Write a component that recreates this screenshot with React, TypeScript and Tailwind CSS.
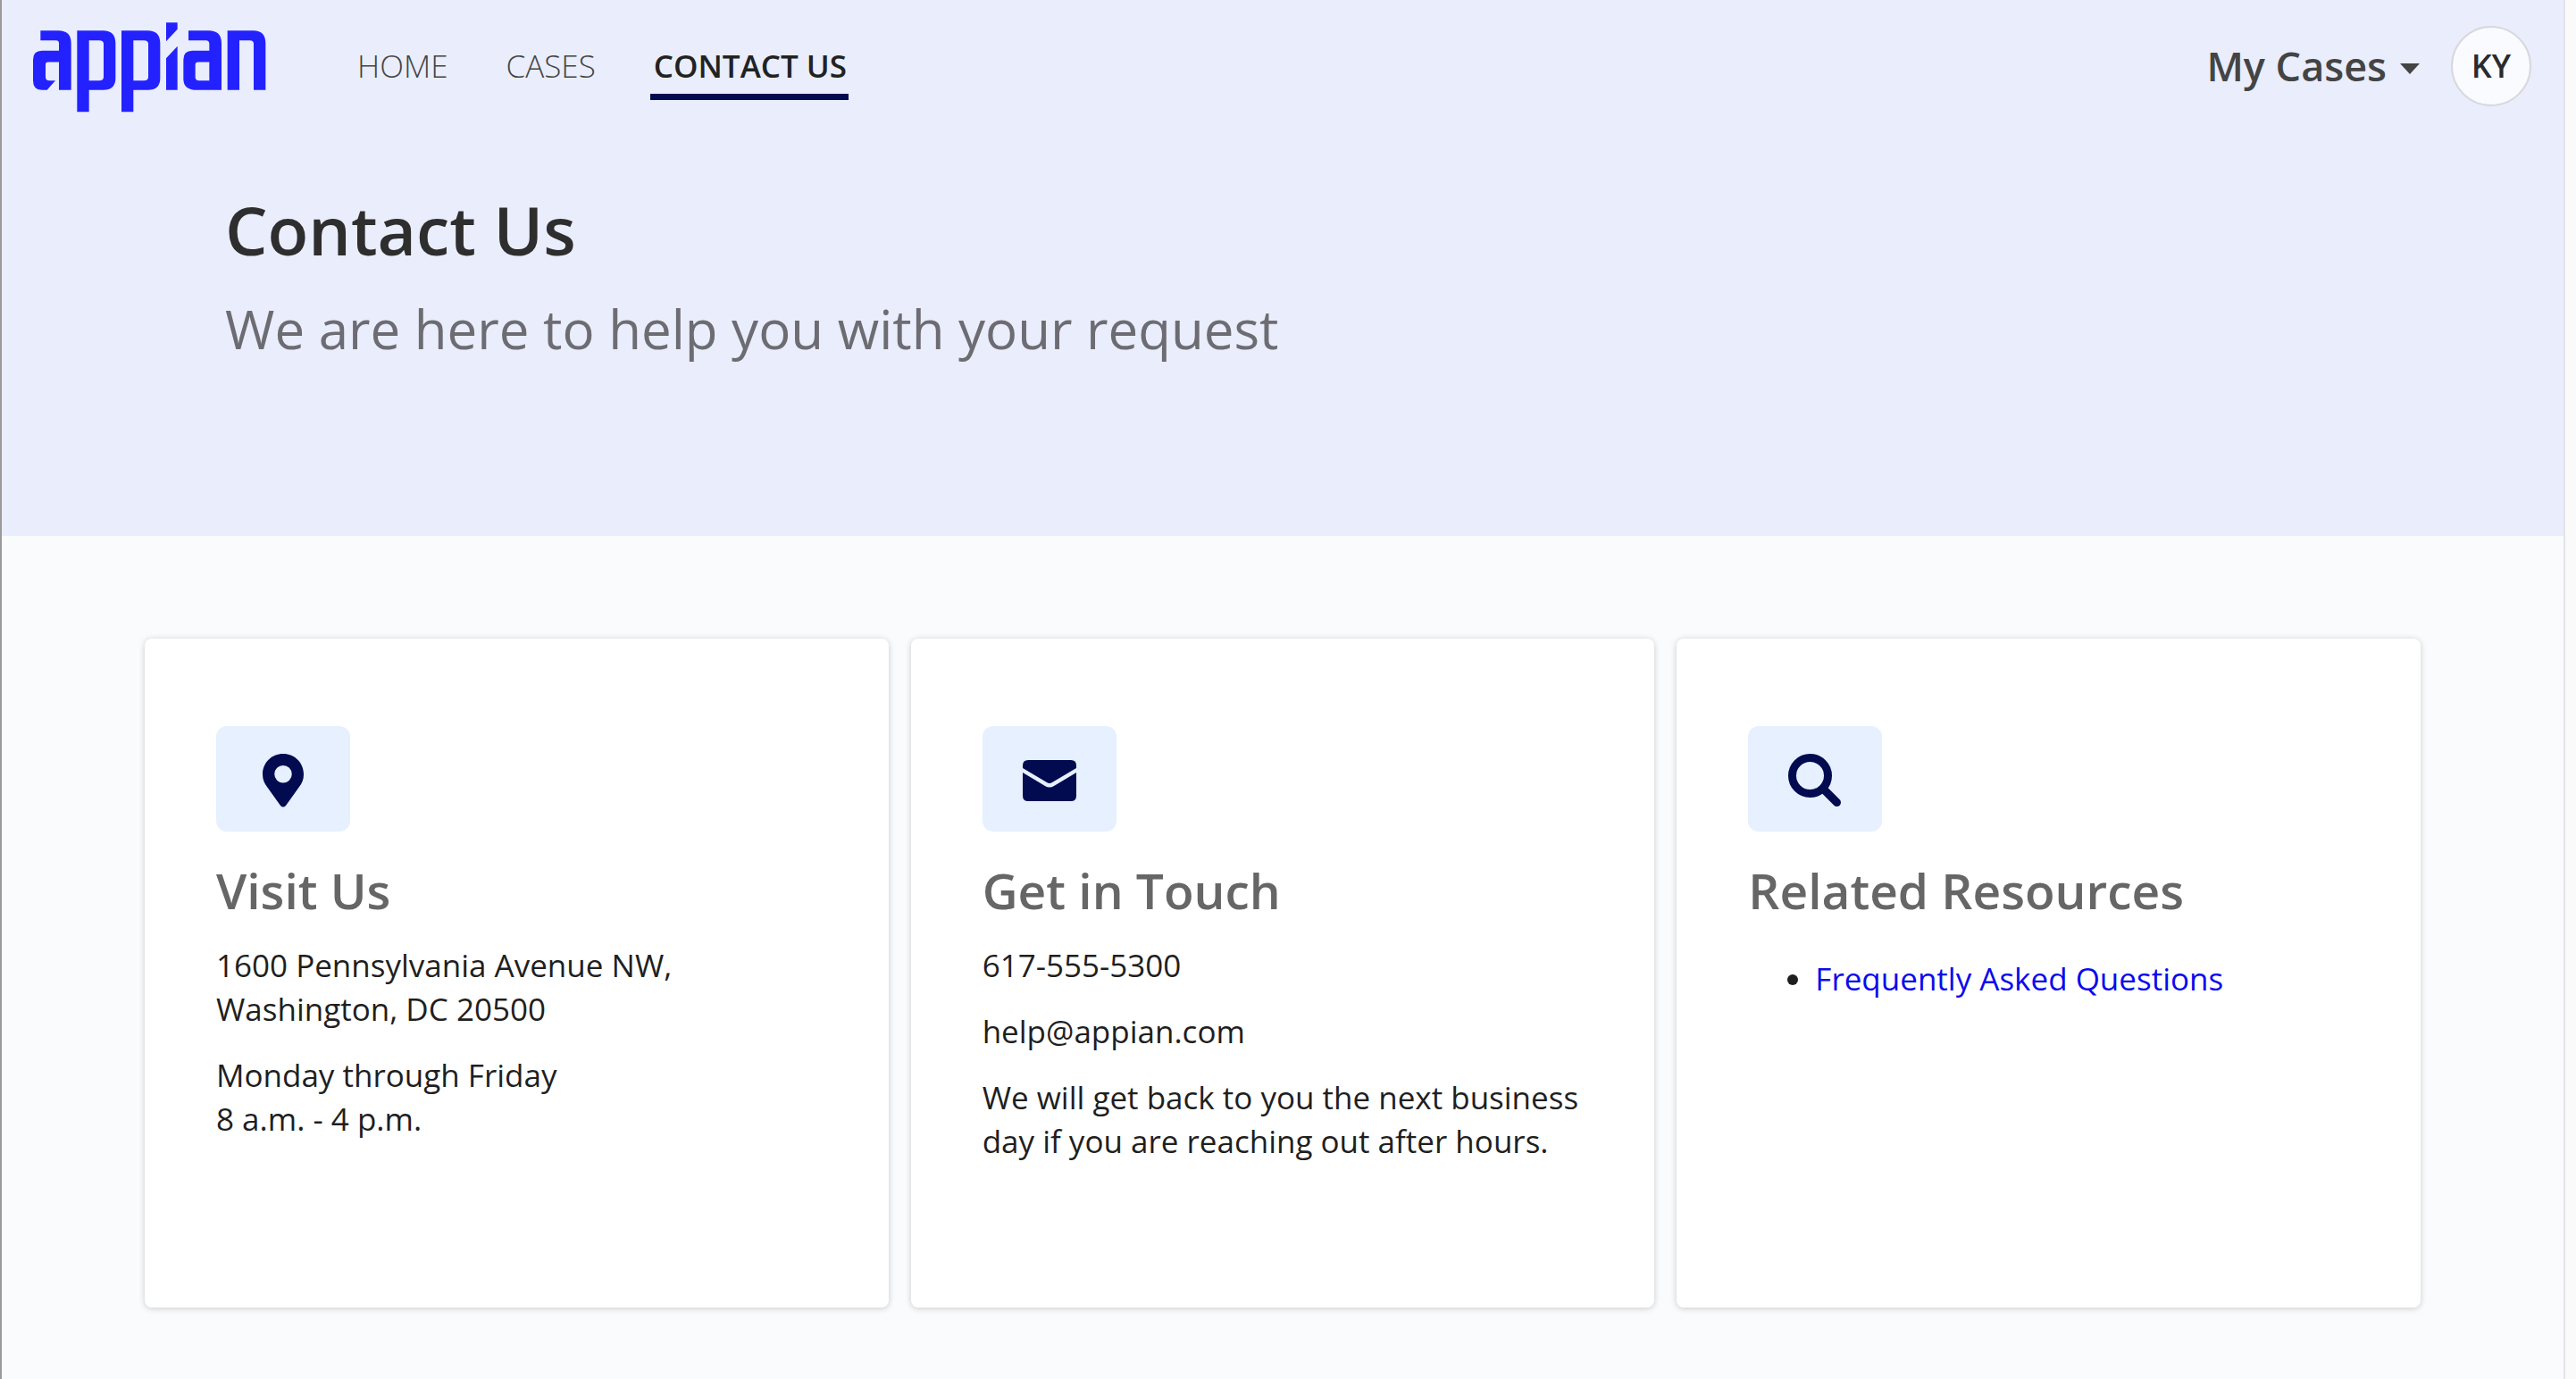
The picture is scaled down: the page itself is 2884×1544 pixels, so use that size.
const font = "font-['Open_Sans',sans-serif]";

function Logo() {
  return (
    <svg width="270" height="107" viewBox="50 45 810 320" className="mt-[9px] block">
      <path
        fill="#2322ff"
        fillRule="evenodd"
        d="M75 72H135Q178 72 178 115V272H137V240H125L97 272H80Q50 272 50 240V170Q50 140 80 140H137V115Q137 105 127 105H75ZM100 178H137V240H105Q92 240 92 228V186Q92 178 100 178Z
        M198 72H285Q327 72 327 115V232Q327 272 285 272H238V345H198ZM238 105V240H272Q287 240 287 228V117Q287 105 272 105Z
        M347 72H435Q477 72 477 115V232Q477 272 435 272H387V345H347ZM387 105V240H422Q437 240 437 228V117Q437 105 422 105Z
        M497 45H535V68L497 108Z
        M535 125V272H497V165Z
        M572 72H640Q683 72 683 115V272H600Q555 272 555 235V170Q555 140 585 140H642V117Q642 105 630 105H572ZM605 178H642V240H608Q595 240 595 228V186Q595 178 605 178Z
        M703 72H790Q831 72 831 115V272H791V117Q791 105 778 105H743V272H703Z"
      />
    </svg>
  );
}

function Pin() {
  return (
    <svg width="46" height="60" viewBox="0 0 46 60">
      <path
        fill="#020a50"
        fillRule="evenodd"
        d="M23 0C10 0 0 10 0 23C0 29 2 33 5 37L20 58Q23 61 26 58L41 37C44 33 46 29 46 23C46 10 36 0 23 0ZM23 13A9.75 9.75 0 1 1 23 32.5A9.75 9.75 0 1 1 23 13Z"
      />
    </svg>
  );
}

function Mail() {
  return (
    <svg width="60" height="46" viewBox="0 0 60 46">
      <path fill="#020a50" d="M6 0H54Q60 0 60 6V9L33 25Q30 27 27 25L0 9V6Q0 0 6 0Z" />
      <path fill="#020a50" d="M0 14L25 29Q30 32 35 29L60 14V40Q60 46 54 46H6Q0 46 0 40Z" />
    </svg>
  );
}

function Search() {
  return (
    <svg width="60" height="60" viewBox="0 0 60 60">
      <circle cx="24.5" cy="24.5" r="20" fill="none" stroke="#020a50" strokeWidth="9" />
      <path d="M40 40L54.5 54.5" stroke="#020a50" strokeWidth="9" strokeLinecap="round" />
    </svg>
  );
}

function Card({ icon, title, children }: { icon: React.ReactNode; title: string; children: React.ReactNode }) {
  return (
    <div className="h-[749px] rounded-lg bg-white pt-[98px] pl-[80px] pr-[60px] shadow-[0_1px_7px_rgba(0,0,0,0.2)]">
      <div className="flex h-[118px] w-[150px] items-center justify-center rounded-xl bg-[#e6f0fe] pt-[4px]">{icon}</div>
      <h2 className="mt-[28px] text-[55px] leading-[76px] font-semibold text-[#666666]">{title}</h2>
      <div className="mt-[21px] text-[35px] leading-[49px] text-[#1f1f1f]">{children}</div>
    </div>
  );
}

export default function App() {
  return (
    <div className={`${font} flex h-[1544px] w-[2884px] overflow-hidden border-l-2 border-[#9a9a9a] bg-[#fafafa]`}>
      <div className="h-full w-[2868px] bg-[#fafbfc]">
        <div className="h-[600px] bg-[#e9edfc]">
          <header className="flex h-[148px] items-center pl-[35px] pr-[36px]">
            <Logo />
            <nav className="ml-[93px] flex h-full items-center gap-[65px] text-[35px]">
              <span className="font-light text-[#444444]">HOME</span>
              <span className="font-light text-[#444444]">CASES</span>
              <span className="relative font-semibold text-[#222222]">
                CONTACT US
                <span className="absolute -bottom-[12px] -left-[4px] -right-[2px] h-[7px] bg-[#020a50]" />
              </span>
            </nav>
            <div className="ml-auto flex items-center">
              <span className="text-[45px] font-semibold text-[#444444]">My Cases</span>
              <svg className="ml-[14px] mt-[6px]" width="24" height="14" viewBox="0 0 24 14">
                <path fill="#444444" d="M1 1H23L12 13Z" />
              </svg>
              <div className="ml-[34px] flex h-[90px] w-[90px] items-center justify-center rounded-full border-2 border-[#d8d8dc] bg-[#fafbff] text-[36px] font-semibold text-[#2b2b2b]">
                KY
              </div>
            </div>
          </header>
          <div className="pl-[250px]">
            <h1 className="mt-[60px] text-[75px] leading-[98px] font-semibold text-[#2e2e2e]">Contact Us</h1>
            <p className="mt-[21px] text-[60px] leading-[82px] text-[#6c6c72]">We are here to help you with your request</p>
          </div>
        </div>
        <div className="ml-[160px] mt-[115px] grid w-[2548px] grid-cols-3 gap-[25px]">
          <Card icon={<Pin />} title="Visit Us">
            <p>1600 Pennsylvania Avenue NW,<br />Washington, DC 20500</p>
            <p className="mt-[25px]">Monday through Friday<br />8 a.m. - 4 p.m.</p>
          </Card>
          <Card icon={<Mail />} title="Get in Touch">
            <p>617-555-5300</p>
            <p className="mt-[25px]">help@appian.com</p>
            <p className="mt-[25px]">We will get back to you the next business day if you are reaching out after hours.</p>
          </Card>
          <Card icon={<Search />} title="Related Resources">
            <ul className="mt-[36px] list-disc pl-[75px]">
              <li className="marker:text-[#1f1f1f]"><span className="text-[#0a0aee]">Frequently Asked Questions</span></li>
            </ul>
          </Card>
        </div>
      </div>
      <div className="h-full w-[12px] shrink-0 border-l-2 border-[#e4e4e8] bg-[#fafafa]" />
    </div>
  );
}
